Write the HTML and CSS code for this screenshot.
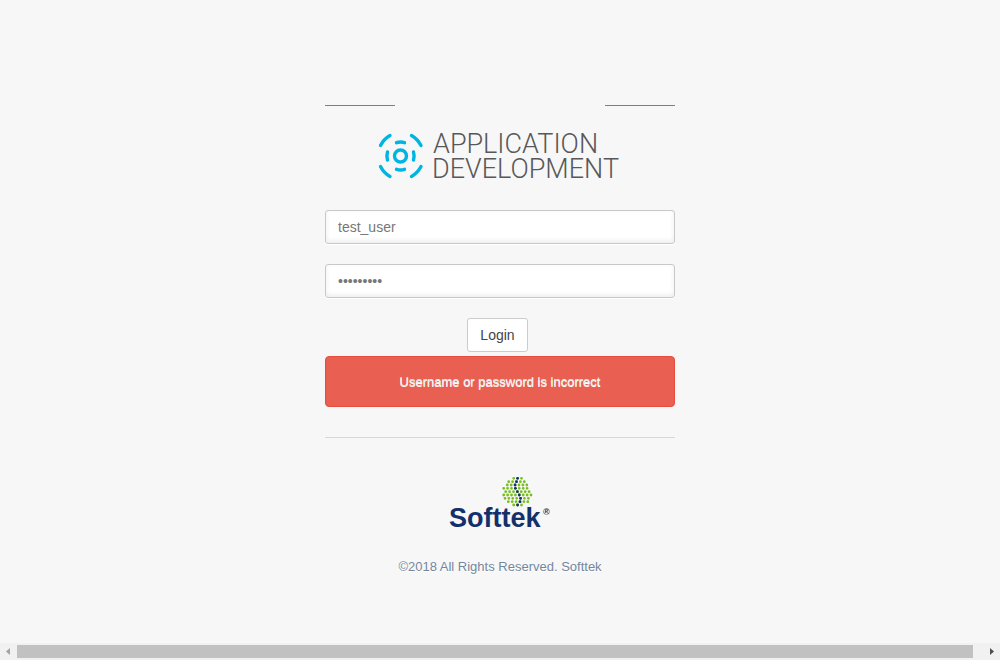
FILE: index.html
```html
<!DOCTYPE html>
<html lang="en">
<head>
<meta charset="utf-8">
<meta name="viewport" content="width=device-width, initial-scale=1">
<title>Application Development</title>
<link rel="stylesheet" href="styles.css">
</head>
<body>
<main class="login">
  <form class="login-form">
    <h1 class="brand">
      <svg class="brand-logo" viewBox="0 0 244 50" role="img" aria-label="Application Development">
        <g class="brand-mark">
          <circle cx="22.500" cy="24" r="6"/>
          <path d="M18.500 10.700Q22.500 9.300 26.500 10.700M18.500 37.300Q22.500 38.700 26.500 37.300M9.500 20Q8.300 24 9.500 28M35.500 20Q36.700 24 35.500 28"/>
          <path d="M2.500 13.500Q5.800 7 12 3.500M33.500 3.500Q39.500 7 43 13.500M2.500 34.500Q5.800 41 12 44.500M33.500 44.500Q39.500 41 43 34.500"/>
        </g>
        <text class="brand-text" x="55" y="21">APPLICATION</text>
        <text class="brand-text" x="54" y="46">DEVELOPMENT</text>
      </svg>
    </h1>
    <input class="field" type="text" placeholder="test_user" aria-label="Username">
    <input class="field" type="password" placeholder="•••••••••" aria-label="Password">
    <div class="actions"><button class="login-button" type="button">Login</button></div>
    <div class="alert" role="alert">Username or password is incorrect</div>
    <footer class="company">
      <svg class="company-logo" viewBox="0 0 102 54" role="img" aria-label="Softtek">
        <g class="globe">
          <path d="M64.700 2.300h8M59.700 5.700h19.500M58.300 9h19.500M54.700 12.300h27.300M56.700 15.700h23.500M54.700 19h27.500M56 22.300h23.500M59.300 25.700h19.500M64.700 29h8"/>
        </g>
        <g class="globe-line">
          <circle cx="68.600" cy="2.300" r="1.400"/><circle cx="67.500" cy="5.700" r="1.400"/><circle cx="66.100" cy="9" r="1.400"/><circle cx="66.400" cy="12.300" r="1.400"/><circle cx="68.400" cy="15.700" r="1.400"/><circle cx="70.300" cy="19" r="1.400"/><circle cx="71.600" cy="22.300" r="1.400"/><circle cx="71" cy="25.700" r="1.400"/><circle cx="68.600" cy="29" r="1.400"/>
        </g>
        <text class="company-text" x="0" y="51">Softtek</text>
        <text class="company-mark" x="94" y="39">®</text>
      </svg>
      <p class="copyright">©2018 All Rights Reserved. Softtek</p>
    </footer>
  </form>
</main>
<div class="scrollbar" aria-hidden="true">
  <svg class="arrow arrow-left" viewBox="0 0 17 17"><path d="M10 5v7L6 8.500z"/></svg>
  <div class="thumb"></div>
  <div class="track-end"></div>
  <svg class="arrow" viewBox="0 0 17 17"><path d="M7 5v7l4-3.500z"/></svg>
</div>
</body>
</html>
```
FILE: styles.css
```css
* {
  box-sizing: border-box;
}

body {
  margin: 0;
  min-height: 100vh;
  display: flex;
  flex-direction: column;
  background: #f7f7f7;
  color: #73879c;
  font: 13px/20px "Liberation Sans", Arial, sans-serif;
}

.login {
  flex: 1;
  width: 100%;
  max-width: 350px;
  margin: 0 auto;
  padding-top: 105px;
  text-align: center;
  text-shadow: 0 1px 0 #fff;
}

.login-form {
  display: flex;
  flex-direction: column;
}

.brand {
  margin: 0 0 28px;
  padding-top: 27px;
  line-height: 0;
  background:
    linear-gradient(#7e7e7e, #7e7e7e) left top / 20% 1px no-repeat,
    linear-gradient(#7e7e7e, #7e7e7e) right top / 20% 1px no-repeat;
}

.brand-logo {
  width: 244px;
  height: 50px;
  overflow: visible;
}

.brand-mark {
  fill: none;
  stroke: #00b5e2;
  stroke-width: 3.4;
  stroke-linecap: round;
}

.brand-text {
  fill: #58585a;
  font: 300 27px Roboto, "Noto Sans", sans-serif;
  text-shadow: none;
}

.field {
  width: 100%;
  height: 34px;
  margin: 0 0 20px;
  padding: 6px 12px;
  border: 1px solid #c8c8c8;
  border-radius: 3px;
  background: #fff;
  box-shadow: 0 1px 0 #fff, 0 -2px 5px rgba(0, 0, 0, 0.08) inset;
  color: #777;
  font: 14px/20px "Liberation Sans", Arial, sans-serif;
}

.field::placeholder {
  color: #777;
  opacity: 1;
}

.actions {
  display: flex;
  justify-content: center;
  padding-right: 5px;
  margin-bottom: 4px;
}

.login-button {
  height: 34px;
  padding: 6px 12px;
  border: 1px solid #ccc;
  border-radius: 3px;
  background: #fff;
  color: #444;
  font: 14px/20px "Liberation Sans", Arial, sans-serif;
}

.alert {
  padding: 15px;
  border: 1px solid #e74c3c;
  border-radius: 4px;
  background: #e95f51;
  color: #e9edef;
  line-height: 19px;
}

.company {
  margin-top: 30px;
  padding-top: 38px;
  border-top: 1px solid #d8d8d8;
  line-height: 0;
}

.company-logo {
  width: 102px;
  height: 54px;
  overflow: visible;
}

.globe {
  fill: none;
  stroke: #78be20;
  stroke-width: 2.8;
  stroke-linecap: round;
  stroke-dasharray: 0 3.9;
}

.globe-line,
.company-text,
.company-mark {
  fill: #13306b;
  text-shadow: none;
}

.company-text {
  font: bold 27px "Liberation Sans", Arial, sans-serif;
}

.company-mark {
  font: bold 9px "Liberation Sans", Arial, sans-serif;
}

.copyright {
  margin: 27px 0 0;
  line-height: 20px;
}

.scrollbar {
  display: flex;
  height: 17px;
  background: #f1f1f1;
}

.arrow {
  flex: none;
  width: 17px;
  height: 17px;
  fill: #505050;
}

.arrow-left {
  fill: #a3a3a3;
}

.thumb {
  flex: 1;
  margin: 2px 0;
  background: #c1c1c1;
}

.track-end {
  width: 10px;
}
```
